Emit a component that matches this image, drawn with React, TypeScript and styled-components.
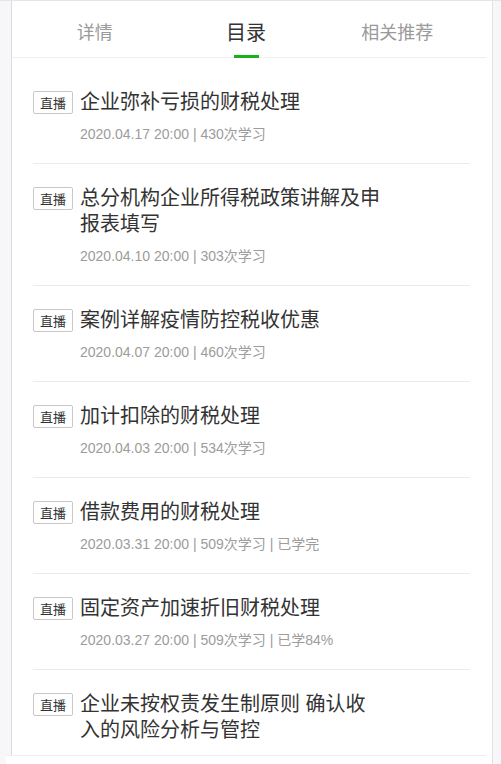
import React from "react";
import styled, { createGlobalStyle } from "styled-components";

const GlobalStyle = createGlobalStyle`
  html, body {
    margin: 0;
    padding: 0;
    background: #f7f7f9;
    font-family: "Liberation Sans", "Noto Sans CJK SC", sans-serif;
  }
  body {
    border-top: 1px solid #e4e4e6;
  }
  * { box-sizing: border-box; }
`;

const Panel = styled.div`
  margin-left: 11px;
  width: 482px;
  height: calc(100vh - 1px);
  overflow: hidden;
  background: #ffffff;
  border-left: 1px solid #dcdcdc;
  border-right: 1px solid #e2e2e4;
`;

const TabBar = styled.nav`
  margin-left: -6px;
  width: 480px;
  height: 57px;
  padding: 3px 13px 0;
  display: flex;
  background: #ffffff;
  border-bottom: 1px solid #efeff1;
`;

const Tab = styled.div<{ $active?: boolean }>`
  position: relative;
  flex: 1;
  display: flex;
  align-items: center;
  justify-content: center;
  font-family: "Noto Sans CJK SC", sans-serif;
  font-size: ${(p) => (p.$active ? "20px" : "18px")};
  color: ${(p) => (p.$active ? "#333333" : "#9a9a9a")};
  padding-top: ${(p) => (p.$active ? "2px" : "0")};
`;

const Underline = styled.span`
  position: absolute;
  left: 50%;
  bottom: -1px;
  width: 25px;
  height: 3px;
  margin-left: -12px;
  background: #15b318;
`;

const List = styled.ul`
  list-style: none;
  margin: 0;
  padding: 10px 22px 0 21px;
`;

const Item = styled.li`
  display: flex;
  align-items: flex-start;
  padding: 21px 0 19px;
  border-bottom: 1px solid #ebebeb;
`;

const Tag = styled.span`
  flex: none;
  margin-top: 2px;
  margin-right: 7px;
  height: 23px;
  padding: 0 6px;
  border: 1px solid #c8c8c8;
  border-radius: 2px;
  font-family: "Noto Sans CJK SC", sans-serif;
  font-size: 13px;
  line-height: 21px;
  color: #333333;
`;

const Body = styled.div`
  display: flex;
  flex-direction: column;
`;

const Title = styled.div`
  max-width: 303px;
  font-family: "Liberation Sans", "Noto Sans CJK SC", sans-serif;
  font-size: 20px;
  line-height: 26px;
  color: #333333;
`;

const Meta = styled.div`
  margin-top: 9px;
  font-size: 14px;
  line-height: 20px;
  color: #9c9c9c;
`;

const BottomBar = styled.div`
  position: fixed;
  left: 6px;
  bottom: 0;
  width: 480px;
  height: 9px;
  background: #ffffff;
  border-top: 1px solid #efeff1;
`;

const items = [
  { title: "企业弥补亏损的财税处理", meta: "2020.04.17 20:00 | 430次学习" },
  { title: "总分机构企业所得税政策讲解及申报表填写", meta: "2020.04.10 20:00 | 303次学习" },
  { title: "案例详解疫情防控税收优惠", meta: "2020.04.07 20:00 | 460次学习" },
  { title: "加计扣除的财税处理", meta: "2020.04.03 20:00 | 534次学习" },
  { title: "借款费用的财税处理", meta: "2020.03.31 20:00 | 509次学习 | 已学完" },
  { title: "固定资产加速折旧财税处理", meta: "2020.03.27 20:00 | 509次学习 | 已学84%" },
  { title: "企业未按权责发生制原则 确认收入的风险分析与管控" },
];

export default function App() {
  return (
    <>
      <GlobalStyle />
      <Panel>
        <TabBar>
          <Tab>详情</Tab>
          <Tab $active>
            目录
            <Underline />
          </Tab>
          <Tab>相关推荐</Tab>
        </TabBar>
        <List>
          {items.map((it) => (
            <Item key={it.title}>
              <Tag>直播</Tag>
              <Body>
                <Title>{it.title}</Title>
                {it.meta && <Meta>{it.meta}</Meta>}
              </Body>
            </Item>
          ))}
        </List>
      </Panel>
      <BottomBar />
    </>
  );
}
